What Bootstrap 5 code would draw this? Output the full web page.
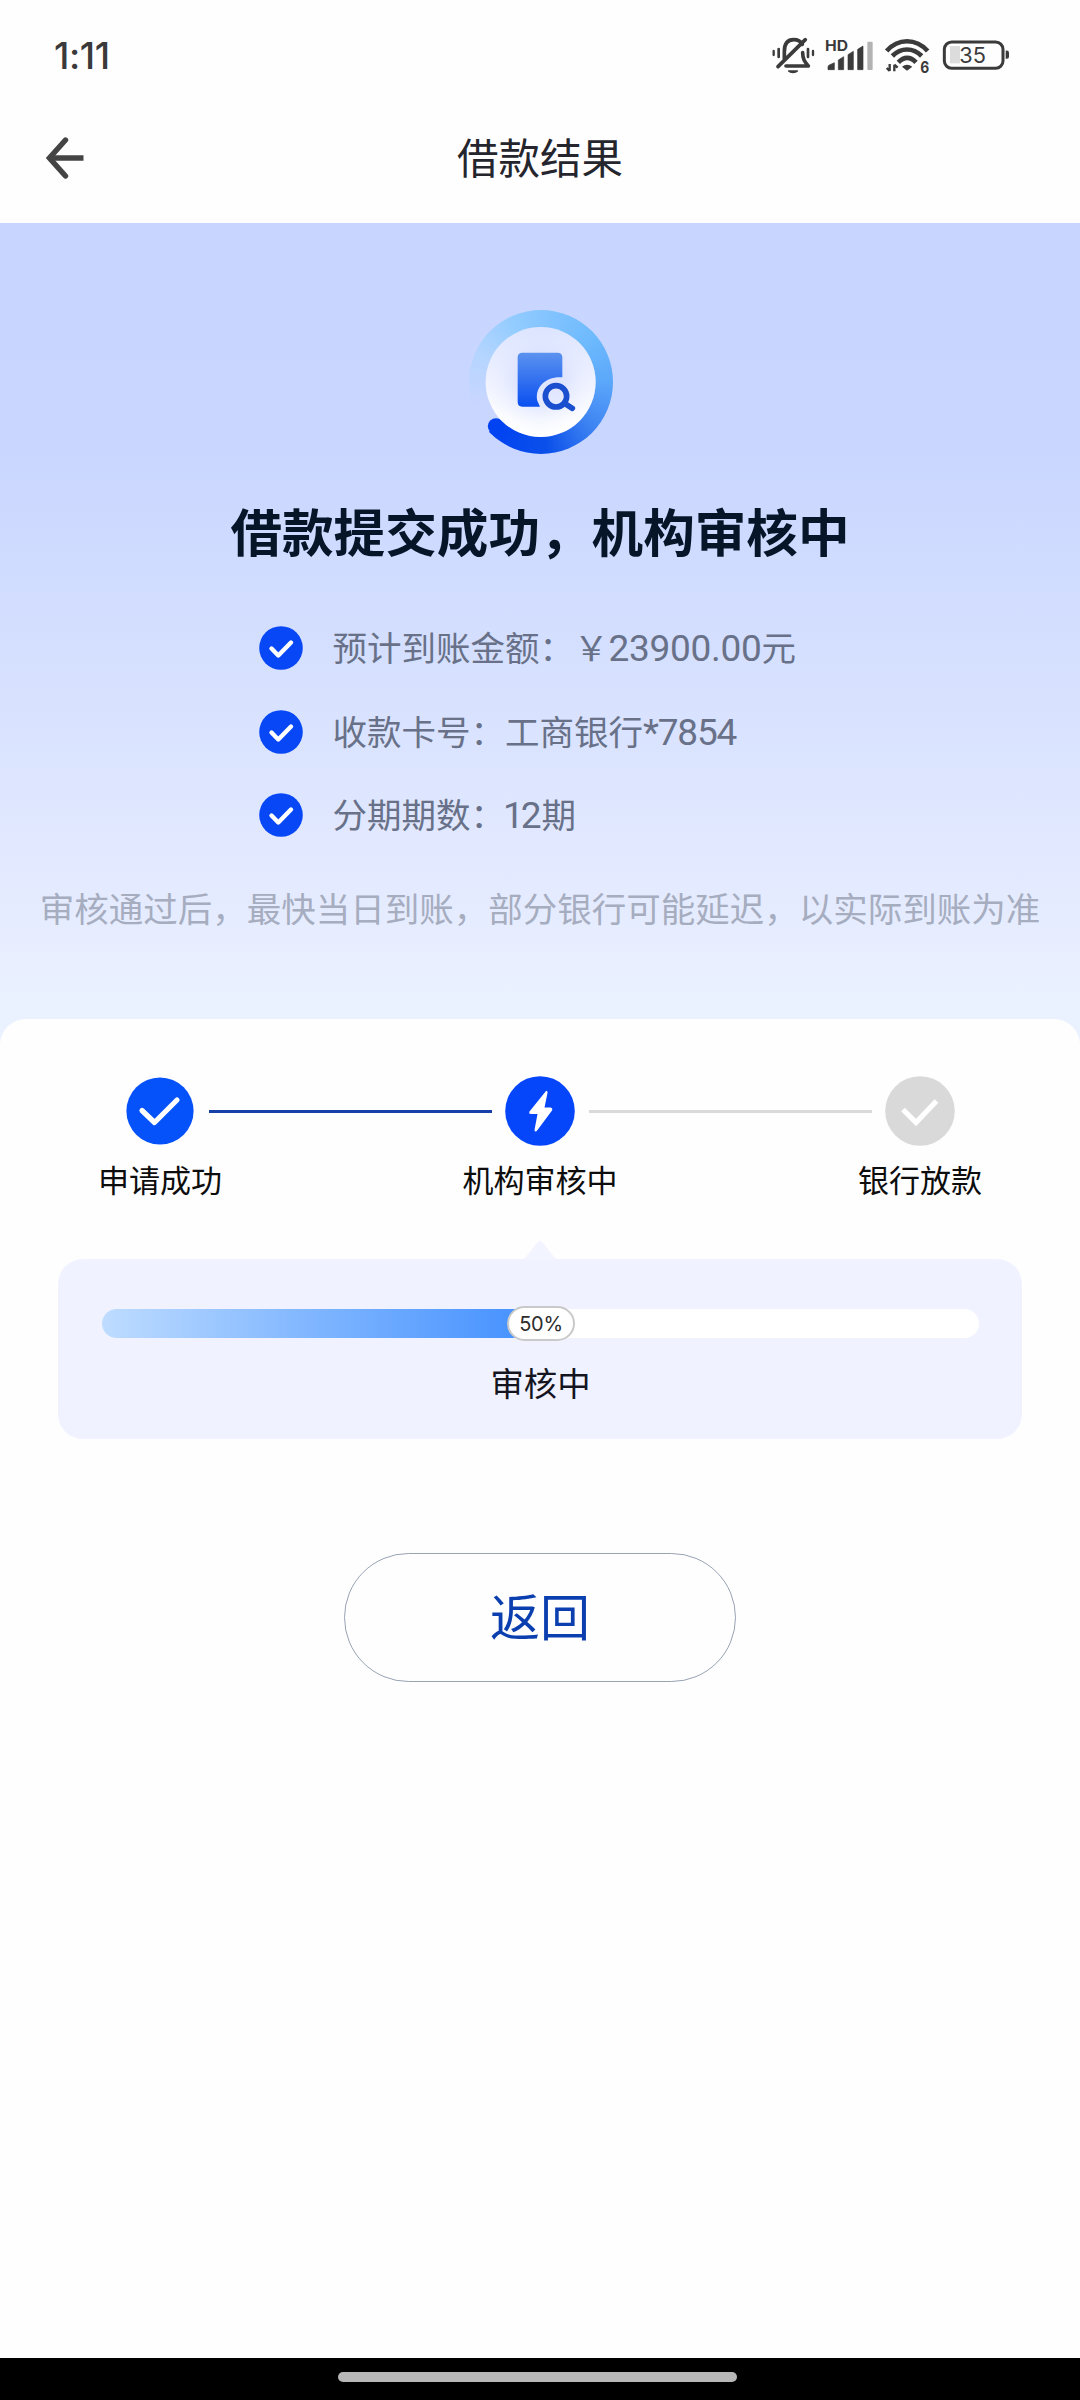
<!DOCTYPE html>
<html lang="zh-CN">
<head>
<meta charset="utf-8">
<meta name="viewport" content="width=device-width, initial-scale=1">
<title>借款结果</title>
<link rel="stylesheet" href="https://cdn.jsdelivr.net/npm/bootstrap@5.3.0/dist/css/bootstrap.min.css">
<style>
  body { font-family: "Noto Sans CJK SC", sans-serif; color: #111; background: #fefefe; }
  .screen { width: 1080px; height: 2400px; }
  .num { font-family: Roboto, "Noto Sans CJK SC", sans-serif; }
  .status-bar { height: 93px; padding: 0 40px 0 54px; }
  .clock { font-family: Inter, sans-serif; font-size: 37px; font-weight: 500; color: #3a3a3a; line-height: 40px; margin-top: 36px; letter-spacing: -.4px; }
  .status-icons { width: 300px; height: 80px; margin-top: 20px; }
  .title-bar { height: 130px; padding: 0 44px 4px 46px; }
  .title-bar svg { width: 40px; height: 42px; margin-top: 3px; }
  .page-title { font-size: 41.5px; line-height: 60px; color: #25252d; padding-right: 42px; }
  .hero { height: 821px; background: linear-gradient(#c8d5ff 0, #c9d6ff 230px, #d8e2ff 480px, #e4eaff 660px, #ebf2ff 795px); }
  .badge-wrap { width: 200px; height: 180px; margin-top: 67px; }
  .ring { left: 29px; top: 20px; width: 144px; height: 144px; border-radius: 50%;
    background: conic-gradient(#86c5ff 0deg, #6ebafd 50deg, #5ba7fa 90deg, #3f85f2 130deg, #0b50ea 175deg, #0042f2 226deg, #c8d6ff00 226.5deg, #c8d6ff00 250deg, #b4d5ff 295deg, #93ccff 335deg, #86c5ff 360deg); }
  .hero-title { font-size: 51.6px; font-weight: 700; line-height: 70px; color: #071529; margin-top: 25px; }
  .facts { margin: 61px 0 0 259px; font-size: 34.5px; color: #687188; }
  .facts li { height: 83.5px; gap: 29.5px; line-height: 50px; }
  .facts svg { width: 44px; height: 44px; }
  .facts .num { font-size: 37px; line-height: 50px; letter-spacing: -.3px; }
  .facts .num-card { letter-spacing: -1.2px; }
  .facts .num-term { letter-spacing: -3px; margin: 0 3px 0 -2px; }
  .facts .txt { margin-top: -5px; }
  .note { font-size: 34.5px; line-height: 50px; color: #a6adbf; margin-top: 5px; }
  .sheet { margin-top: -25px; border-radius: 26px 26px 0 0; background: #fefefe; }
  .steps { padding: 57px 111px 0 111.5px; height: 240px; }
  .step { width: 97px; }
  .step svg { width: 70px; height: 70px; flex: none; }
  .step span { font-size: 31px; line-height: 44px; margin-top: 11px; color: #0d0d0d; white-space: nowrap; }
  .step-line { height: 3px; width: 283px; margin-top: 34px; }
  .line-done { background: #173fa8; }
  .line-todo { background: #dadada; }
  .review { width: 964px; height: 180px; border-radius: 25px; background: #f0f3ff; padding: 50px 43px 0 44px; }
  .tip { left: 463px; top: -19px; width: 38px; height: 20px; }
  .bar { height: 29px; border-radius: 15px; background: #fff; }
  .bar-fill { height: 29px; border-radius: 15px 0 0 15px; background: linear-gradient(90deg, #bedcff, #83b8ff 45%, #428fff); }
  .pct { left: 405px; top: -3px; width: 68px; height: 35px; border-radius: 18px; background: #fff; border: 2px solid #c9c9c9; font-size: 20px; color: #2c2c2c; font-family: Inter, sans-serif; letter-spacing: -.3px; }
  .review-label { font-size: 33.4px; line-height: 48px; margin-top: 20px; color: #15151f; }
  .back-btn, .back-btn:hover { width: 392px; height: 129px; border-radius: 65px; border: 1px solid #98a3b3; color: #0b3faf; font-size: 50px; margin-top: 114px; background: transparent; line-height: 70px; padding: 0 0 7px; }
  .home-bar { height: 42px; background: #000; padding: 14px 0 0 338px; }
  .home-bar div { width: 399px; height: 10px; border-radius: 5px; background: #b7b7b7; }
</style>
<script src="https://cdn.jsdelivr.net/npm/bootstrap@5.3.0/dist/js/bootstrap.bundle.min.js"></script>
</head>
<body>
<svg class="d-none">
  <symbol id="tick" viewBox="0 0 44 44"><circle cx="22" cy="22" r="21.8" fill="#0747f5"/><path d="M12.5 22.5 19.3 29.5 32 16.5" fill="none" stroke="#fff" stroke-width="4.4" stroke-linecap="round" stroke-linejoin="round"/></symbol>
</svg>
<div class="screen d-flex flex-column overflow-hidden">
  <div class="status-bar d-flex justify-content-between">
    <div class="clock">1:11</div>
    <svg class="status-icons" viewBox="0 0 900 240" fill="none" stroke="#3b3b3b">
      <g stroke-width="11" stroke-linecap="round" stroke-linejoin="round">
        <path d="M133 117V95C133 72 143 59 161 59 174 59 183 65 187 73M188 98C188 120 196 127 205 138H138M114 140 196 59"/>
        <path d="M146 153H172C166 159 152 159 146 153Z" stroke-width="5" fill="#3b3b3b"/>
        <path d="M116 87V111M204 87V111" stroke-width="8"/><path d="M101 93V105M219 93V105" stroke-width="7"/>
      </g>
      <text x="255" y="94" font-family="Inter" font-size="43" font-weight="700" fill="#3b3b3b" stroke="none" textLength="69" lengthAdjust="spacingAndGlyphs">HD</text>
      <g fill="#3b3b3b" stroke="none">
        <path d="M264 149V141Q264 137 268 135L283 128V149ZM295 149V120L311 110V149ZM324 149V104L340 94V149ZM353 149V88L369 78V149Z" stroke="#3b3b3b" stroke-width="2"/>
        <rect x="382" y="65" width="16" height="85" rx="3" fill="#b3b3b3"/>
      </g>
      <g stroke-width="14" stroke-linecap="butt">
        <path d="M440 93C474 54 528 54 563 93"/>
        <path d="M457 108C483 82 519 82 545 108"/>
        <path d="M475 127C492 109 511 109 528 127"/>
      </g>
      <path d="M486 140Q501 128 517 140L501 152Z" fill="#3b3b3b" stroke="none"/>
      <path d="M449 132V153M449 153 440 144M463 154V134M463 134 473 143" stroke-width="7"/>
      <text x="541" y="158" font-family="Inter" font-size="46" font-weight="700" fill="#3b3b3b" stroke="none" textLength="27" lengthAdjust="spacingAndGlyphs">6</text>
      <rect x="630" y="78" width="30" height="52" fill="#dcdcdc" stroke="none"/>
      <rect x="613" y="66" width="176" height="79" rx="22" stroke-width="9"/>
      <path d="M797 92Q807 90 807 98V110Q807 118 797 116Z" fill="#3b3b3b" stroke="none"/>
      <text x="658" y="130" font-family="Inter" font-size="65" fill="#3b3b3b" stroke="none" textLength="80" lengthAdjust="spacingAndGlyphs">35</text>
    </svg>
  </div>
  <nav class="title-bar d-flex align-items-center">
    <svg viewBox="0 0 40 42" fill="none" stroke="#444" stroke-width="5.4"><path d="M19.5 3 3.5 21 19.5 39" stroke-linecap="round"/><path d="M3 21H37.5"/></svg>
    <h1 class="page-title fw-normal mb-0 mx-auto">借款结果</h1>
  </nav>
  <section class="hero d-flex flex-column flex-shrink-0">
    <div class="badge-wrap position-relative align-self-center flex-shrink-0">
      <div class="ring position-absolute"></div>
      <svg class="position-absolute start-0 top-0" width="200" height="180" viewBox="0 0 600 540">
        <defs>
          <linearGradient id="disc" x1="0" y1="0" x2="0" y2="1"><stop offset="0" stop-color="#cdd9ff"/><stop offset=".45" stop-color="#e6ebff"/><stop offset=".85" stop-color="#fff"/></linearGradient>
          <radialGradient id="edge"><stop offset=".45" stop-color="#d9e0ff" stop-opacity=".6"/><stop offset="1" stop-color="#fff" stop-opacity=".3"/></radialGradient>
          <linearGradient id="doc" x1="0" y1="0" x2="0" y2="1"><stop offset="0" stop-color="#5b93ef"/><stop offset="1" stop-color="#0a4ff0"/></linearGradient>
        </defs>
        <circle cx="168" cy="409" r="24.5" fill="#0143f1"/>
        <circle cx="302" cy="276" r="165" fill="url(#disc)"/>
        <circle cx="302" cy="276" r="165" fill="url(#edge)"/>
        <path d="M247 188H353Q367 188 367 202V262C320 258 283 290 292 332L300 350H247Q233 350 233 336V202Q233 188 247 188Z" fill="url(#doc)"/>
        <g fill="none" stroke="#1a50cf" stroke-width="17" stroke-linecap="round"><circle cx="348" cy="319" r="32"/><path d="M375 341 397 355"/></g>
      </svg>
    </div>
    <h2 class="hero-title text-center mb-0">借款提交成功，机构审核中</h2>
    <ul class="facts list-unstyled mb-0">
      <li class="d-flex"><svg><use href="#tick"/></svg><span class="txt">预计到账金额：￥<span class="num">23900.00</span>元</span></li>
      <li class="d-flex"><svg><use href="#tick"/></svg><span class="txt">收款卡号：工商银行<span class="num num-card">*7854</span></span></li>
      <li class="d-flex"><svg><use href="#tick"/></svg><span class="txt">分期期数：<span class="num num-term">12</span>期</span></li>
    </ul>
    <p class="note text-center text-nowrap mb-0">审核通过后，最快当日到账，部分银行可能延迟，以实际到账为准</p>
  </section>
  <main class="sheet flex-grow-1 d-flex flex-column align-items-center">
    <div class="steps d-flex align-self-stretch">
      <div class="step d-flex flex-column align-items-center flex-shrink-0">
        <svg viewBox="0 0 70 70"><circle cx="35" cy="35" r="33.6" fill="#0552fa"/><path d="M17 34.5 29.5 46.5 52 24" fill="none" stroke="#fff" stroke-width="5.2" stroke-linecap="round" stroke-linejoin="round"/></svg>
        <span>申请成功</span>
      </div>
      <div class="step-line line-done flex-shrink-0"></div>
      <div class="step d-flex flex-column align-items-center flex-shrink-0">
        <svg viewBox="0 0 70 70"><circle cx="35" cy="35" r="34.8" fill="#0546fb"/><path d="M41 15 24.5 35.5Q23.5 38 26 38H32.5L29.5 54Q30 57 32.5 54L47 34.5Q48 32 45.5 31.5H39.5L42.5 17Q42.5 14 41 15Z" fill="#fff"/></svg>
        <span>机构审核中</span>
      </div>
      <div class="step-line line-todo flex-shrink-0"></div>
      <div class="step d-flex flex-column align-items-center flex-shrink-0">
        <svg viewBox="0 0 70 70"><circle cx="35" cy="35" r="34.8" fill="#d9d9d9"/><path d="M18 33.5 31 46.5 51.5 25" fill="none" stroke="#fff" stroke-width="5.2"/></svg>
        <span>银行放款</span>
      </div>
    </div>
    <div class="review position-relative flex-shrink-0">
      <svg class="tip position-absolute" viewBox="0 0 38 20"><path d="M0 20Q4 19 8 13L16 3Q19 -1 22 3L30 13Q34 19 38 20Z" fill="#f2f4ff"/></svg>
      <div class="bar position-relative">
        <div class="bar-fill w-50"></div>
        <div class="pct position-absolute d-flex align-items-center justify-content-center">50%</div>
      </div>
      <div class="review-label text-center">审核中</div>
    </div>
    <button type="button" class="btn back-btn flex-shrink-0">返回</button>
  </main>
  <footer class="home-bar flex-shrink-0"><div></div></footer>
</div>
</body>
</html>
